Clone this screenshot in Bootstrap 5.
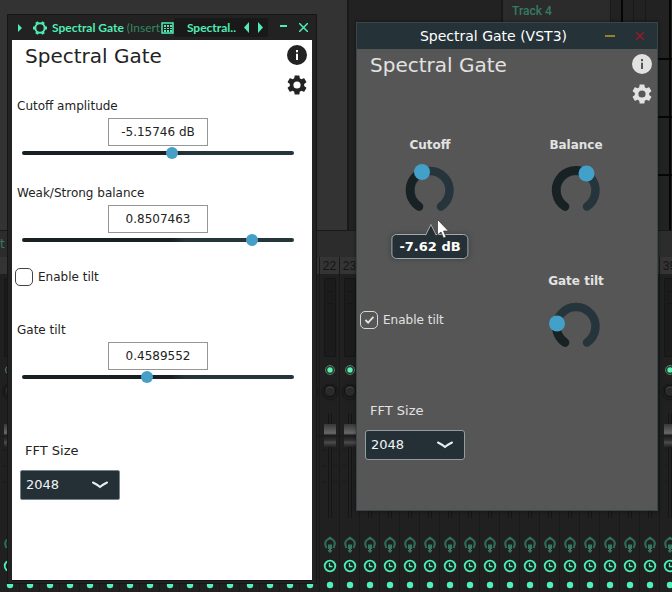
<!DOCTYPE html>
<html lang="en">
<head>
<meta charset="utf-8">
<meta name="viewport" content="width=device-width, initial-scale=1">
<title>Spectral Gate</title>
<link href="https://cdn.jsdelivr.net/npm/bootstrap@5.3.0/dist/css/bootstrap.min.css" rel="stylesheet">
<style>
  :root { --mint: #4fecb4; --slate: #243036; --ink: #232323; --accent: #469fc6; --pale: #e2e2e2; }
  body { background: #212121; font-family: "DejaVu Sans", Verdana, sans-serif; font-size: 12px; line-height: 20px; }
  svg { display: block; flex: none; }
  .desktop { min-height: 100vh; }

  /* host application behind the windows */
  .playlist { height: 230px; background: #222; }
  .pane-a { width: 349px; background: #333; border-right: 2px solid #191919; }
  .pane-gap { width: 6px; background: #2c2c2c; }
  .pane-b { width: 154px; border-right: 2px solid #191919; }
  .track-head { width: 102px; padding-left: 3px; background: #2b2b2b; border-right: 1px solid #191919; color: #377a63; font: 500 12px/23px Roboto, sans-serif; }
  .lanes { background: repeating-linear-gradient(#0000 0 56px, #060606 56px 58px) 0 2px, linear-gradient(90deg, #0000 10px, #060606 10px 12px, #0000 12px 22px, #191919 22px 23px, #0000 23px 34px, #191919 34px 35px, #0000 35px 58px, #060606 58px 60px, #0000 60px) #222; }
  .mixer-bar { height: 27px; background: #2c2c2c; border-top: 1px solid #1a1a1a; color: #377a63; line-height: 26px; }
  .strip-col { width: 20px; background: #202020; border-right: 1px solid #191919; flex: none; }
  .strip-num { height: 17px; background: #343434; color: #151515; font: 12px/18px "Liberation Sans", sans-serif; }

  .win { position: absolute; }
  .win-host { left: 7px; top: 14px; width: 310px; background: #222; border: 1px solid #161616; padding: 0 4px 2px; }
  .host-bar { height: 25px; color: var(--mint); font: 700 12px/18px Lato, sans-serif; }
  .host-bar button, .vst-bar button, .tool { background: none; border: 0; padding: 0; color: inherit; }
  .host-bar .faded { color: #348566; font-weight: 400; width: 34px; overflow: hidden; white-space: nowrap; }
  .preset { background: #191919; border-radius: 2px; height: 19px; width: 94px; }
  .face { background: #fff; color: var(--ink); border-bottom: 1px solid #111; padding-bottom: 80px; }
  .face-title { font-size: 20px; line-height: 30px; font-weight: 400; margin: 0; }
  .face-head { height: 56px; padding: 1px 4px 0 13px; }
  .tools { padding-top: 4px; gap: 9px; }
  .param { height: 64px; padding: 0 5px; }
  .param-value { width: 100px; height: 28px; border: 1px solid #969696; color: var(--ink); text-align: center; display: block; margin: 2px 0 0 91px; padding: 0; background: #fff; }
  .param .form-range { height: 14px; margin: 0 5px; width: calc(100% - 18px); display: block; }
  .form-range::-webkit-slider-runnable-track { height: 4px; border-radius: 2px; background: linear-gradient(90deg, #192023, #192023 55%, #26353b 60%); }
  .form-range::-webkit-slider-thumb { width: 12px; height: 12px; margin-top: -4px; background: var(--accent); }
  .tick { display: flex; align-items: center; padding: 0; margin: 0; min-height: 20px; }
  .tick .form-check-input { float: none; margin: 0 5px 0 0; width: 18px; height: 18px; border: 1px solid #444; border-radius: 5px; }
  .win-host .tick { padding-left: 3px; margin-top: 20px; }
  .fft { width: 100px; height: 30px; font-size: 13px; line-height: 18px; color: #f2f5f6; background-color: var(--slate); border: 1px solid #75838a; border-radius: 2px; padding: 0 0 0 5px;
    background-image: url("data:image/svg+xml,%3Csvg xmlns='http://www.w3.org/2000/svg' viewBox='0 0 16 8'%3E%3Cpath d='M1 1.5Q5 3.5 8 6Q11 3.5 15 1.5' fill='none' stroke='%23e8eef0' stroke-width='2' stroke-linecap='round'/%3E%3C/svg%3E");
    background-size: 16px 8px; background-position: right 11px center; }
  .fft-label { font-size: 13px; display: block; margin: 0 0 9px 5px; }
  .gap-l { margin-top: 23px; } .gap-xl { margin-top: 33px; } .gap-xxl { margin-top: 57px; }

  .win-vst { left: 356px; top: 22px; width: 302px; background: #565656; border: 1px solid #3b464b; color: var(--pale); padding-bottom: 50px; box-shadow: 0 0 4px #0006; }
  .vst-bar { height: 26px; background: #253238; color: #fff; font-size: 14px; }
  .vst-bar span { margin-right: 30px; }
  .vst-head { height: 86px; padding: 1px 4px 0 13px; }
  .knobs { margin-right: 8px; }
  .knob { font-weight: 700; position: relative; height: 79px; }
  .dial { position: relative; width: 54px; height: 54px; margin-top: 5px; }
  .dial input { position: absolute; inset: 0; width: 100%; height: 100%; opacity: 0; margin: 0; }
  .bubble { position: absolute; top: 99px; left: 50%; transform: translateX(-50%); height: 25px; padding: 0 7px; white-space: nowrap; font-size: 13px; line-height: 23px; color: #fff; background: var(--slate); border: 1px solid #a5acb0; border-radius: 5px; box-shadow: 0 0 5px #24303699; }
  .bubble svg { position: absolute; left: 50%; margin-left: -5px; top: -11px; }
  .cursor { position: absolute; left: 80px; top: 84px; }
  .win-vst .form-check-input { border-color: #d8d8d8; background-color: transparent;
    background-image: url("data:image/svg+xml,%3Csvg xmlns='http://www.w3.org/2000/svg' viewBox='0 0 18 18'%3E%3Cpath d='M5 9l3 3 6-6.500' fill='none' stroke='%23e2e2e2' stroke-width='2'/%3E%3C/svg%3E"); }
  .win-vst .tick { margin-top: 39px; padding-left: 3px; }
  .win-vst .fft { border-radius: 3px; border-color: #929da2; }
  .vst-fft { margin-top: 51px; }
</style>
<script src="https://cdn.jsdelivr.net/npm/bootstrap@5.3.0/dist/js/bootstrap.bundle.min.js"></script>
</head>
<body>
<svg width="0" height="0" class="position-absolute" aria-hidden="true">
  <defs>
    <linearGradient id="cap" x2="0" y2="1"><stop offset="0" stop-color="#393939"/><stop offset=".4" stop-color="#686868"/><stop offset=".5" stop-color="#1b1b1b"/><stop offset=".7" stop-color="#303030"/><stop offset=".8" stop-color="#4b4b4b"/><stop offset="1" stop-color="#222"/></linearGradient>
    <symbol id="strip" viewBox="0 0 20 318">
      <path d="M4.500 4.500h11v78h-11zM7 17.500h6M7 29.500h6" fill="#1b1b1b" stroke="#161616"/>
      <circle cx="10" cy="96" r="4.500" fill="#153a29" stroke="#667568"/><circle cx="10" cy="96" r="2.700" fill="#5ff0b0"/>
      <circle cx="10" cy="118" r="8" fill="#1d1d1d" stroke="#181818"/><circle cx="10" cy="117" r="5.500" fill="#2a2a2a" stroke="#111"/><path d="M6 115q4-4 8 0" stroke="#444" fill="none"/>
      <path d="M8.500 139v105M11.500 139v105" stroke="#151515"/>
      <path d="M0 162h5M15 162h5M3 176h3M3 192h3M3 208h3M14 176h3M14 192h3M14 208h3" stroke="#181818"/>
      <rect x="4" y="150" width="12" height="23" rx="1" fill="url(#cap)"/>
      <path d="M6.500 274Q3.500 268 7.500 265.500L10 264l2.500 1.500Q16.500 268 13.500 274" fill="none" stroke="#2f6d58" stroke-width="2"/><path d="M10 262.500l3 3H7zM8 270.500h4v4.500H8zM9 275h2v3.500H9zM8 276h4v1.500H8z" fill="#34775f"/>
      <circle cx="10" cy="292" r="5.300" fill="#17241f" stroke="#4fecb4" stroke-width="1.800"/><path d="M9.500 289v3.500h3" fill="none" stroke="#4fecb4" stroke-width="1.300"/>
      <circle cx="10" cy="311" r="3.200" fill="#55f0b9"/>
    </symbol>
    <symbol id="gear" viewBox="0 0 24 24"><path fill="currentColor" d="M19.140 12.940c.04-.3.060-.61.060-.94s-.02-.64-.07-.94l2.030-1.580c.18-.14.230-.41.120-.61l-1.920-3.320c-.12-.22-.37-.29-.59-.22l-2.390.96c-.5-.38-1.030-.7-1.620-.94l-.36-2.540c-.04-.24-.24-.41-.48-.41h-3.840c-.24 0-.43.170-.47.410l-.36 2.540c-.59.240-1.130.570-1.620.940l-2.390-.96c-.22-.08-.47 0-.59.220L2.740 8.870c-.12.210-.08.470.120.610l2.030 1.580c-.05.300-.09.630-.09.940s.02.640.070.940l-2.030 1.580c-.18.140-.23.410-.12.610l1.920 3.320c.12.220.370.290.590.220l2.390-.96c.5.380 1.030.700 1.620.940l.36 2.540c.05.240.240.410.480.410h3.840c.24 0 .44-.17.470-.41l.36-2.540c.59-.24 1.130-.56 1.620-.94l2.390.96c.22.080.470 0 .59-.22l1.920-3.320c.12-.22.070-.47-.12-.61zM12 15.600A3.600 3.600 0 1 1 12 8.400a3.600 3.600 0 0 1 0 7.200z"/></symbol>
    <symbol id="info" viewBox="0 0 20 20"><path fill="currentColor" fill-rule="evenodd" d="M10 0a10 10 0 1 0 0 20a10 10 0 1 0 0-20zM9 5h2v2.200H9zM9 8.700h2V15H9z"/></symbol>
  </defs>
</svg>

<main class="desktop position-relative overflow-hidden d-flex flex-column">
  <div class="playlist d-flex flex-shrink-0">
    <div class="pane-a flex-shrink-0"></div>
    <div class="pane-b flex-shrink-0"></div>
    <div class="pane-gap flex-shrink-0"></div>
    <div class="track-head flex-shrink-0">Track 4</div>
    <div class="lanes flex-grow-1"></div>
  </div>
  <div class="mixer-bar flex-shrink-0">t</div>
  <div class="d-flex flex-grow-1" id="mixer"></div>

  <section class="win win-host" aria-label="Spectral Gate (Insert)">
    <div class="host-bar d-flex align-items-center">
      <button class="ms-1" aria-label="Options"><svg width="8" height="8"><path d="M2 0l4 4-4 4z" fill="currentColor"/></svg></button>
      <button class="ms-2" aria-label="Settings"><svg width="16" height="16" viewBox="0 0 16 16"><circle cx="8" cy="8" r="4.700" fill="none" stroke="currentColor" stroke-width="2"/><path d="M12.500 8H15M10.300 11.900l1.200 2.100M5.700 11.900L4.500 14M3.500 8H1M5.700 4.100L4.500 2M10.300 4.100l1.200-2.100" stroke="currentColor" stroke-width="3"/></svg></button>
      <span class="ps-1 text-nowrap">Spectral Gate&nbsp;</span><span class="faded">(Insert</span>
      <button aria-label="Presets"><svg width="13" height="12"><path d="M1 1h11v10H1z" fill="none" stroke="currentColor" stroke-width="1.500"/><path d="M3 3h2v2H3zm3 0h2v2H6zm3 0h2v2H9zM3 6h2v1H3zm3 0h2v1H6zm3 0h2v1H9zM3 8h2v2H3zm3 0h2v2H6zm3 0h2v2H9z" fill="currentColor"/></svg></button>
      <div class="preset d-flex align-items-center ms-auto justify-content-end pe-1 gap-2">
        <span>Spectral..</span>
        <button aria-label="Previous preset"><svg width="6" height="11"><path d="M5 0v11L0 5.500z" fill="currentColor"/></svg></button>
        <button aria-label="Next preset"><svg width="6" height="11"><path d="M0 0v11l5-5.500z" fill="currentColor"/></svg></button>
      </div>
      <button class="ms-2 ps-1" aria-label="Minimize"><svg width="7" height="10"><path d="M0 3h7" stroke="currentColor" stroke-width="2"/></svg></button>
      <button class="ms-2 ps-1 me-1" aria-label="Close"><svg width="9" height="9"><path d="M0 0l9 9M9 0L0 9" stroke="currentColor" stroke-width="1.500"/></svg></button>
    </div>
    <div class="face">
      <div class="face-head d-flex justify-content-between">
        <h1 class="face-title">Spectral Gate</h1>
        <div class="tools d-flex flex-column align-items-center">
          <button class="tool" aria-label="About"><svg width="20" height="20"><use href="#info"/></svg></button>
          <button class="tool" aria-label="Settings"><svg width="22" height="22" viewBox="1 1 22 22"><use href="#gear" width="24" height="24"/></svg></button>
        </div>
      </div>
      <div class="param">
        <label for="cutoff" class="d-block">Cutoff amplitude</label>
        <input class="param-value" value="-5.15746 dB" aria-label="Cutoff amplitude value">
        <input type="range" class="form-range" id="cutoff" min="0" max="1" step="any" value="0.554">
      </div>
      <div class="param gap-l">
        <label for="balance" class="d-block">Weak/Strong balance</label>
        <input class="param-value" value="0.8507463" aria-label="Balance value">
        <input type="range" class="form-range" id="balance" min="0" max="1" step="any" value="0.86">
      </div>
      <div class="form-check tick">
        <input class="form-check-input" type="checkbox" id="tilt"><label for="tilt">Enable tilt</label>
      </div>
      <div class="param gap-xl">
        <label for="gate" class="d-block">Gate tilt</label>
        <input class="param-value" value="0.4589552" aria-label="Gate tilt value">
        <input type="range" class="form-range" id="gate" min="0" max="1" step="any" value="0.459">
      </div>
      <div class="ps-2 gap-xxl">
        <label class="fft-label" for="fft">FFT Size</label>
        <select class="form-select fft" id="fft"><option>2048</option></select>
      </div>
    </div>
  </section>

  <section class="win win-vst" aria-label="Spectral Gate (VST3)">
    <div class="vst-bar d-flex align-items-center justify-content-end">
      <span class="pe-2">Spectral Gate (VST3)</span>
      <button aria-label="Minimize"><svg width="10" height="4"><path d="M0 2h10" stroke="#95802c" stroke-width="2"/></svg></button>
      <button class="ms-3 ps-1 me-2 pe-1" aria-label="Close"><svg width="10" height="10"><path d="M1 1l8 8M9 1L1 9" stroke="#8e1e2c" stroke-width="1.700"/></svg></button>
    </div>
    <div class="vst-head d-flex justify-content-between">
      <h1 class="face-title">Spectral Gate</h1>
      <div class="tools d-flex flex-column align-items-center">
        <button class="tool" aria-label="About"><svg width="20" height="20"><use href="#info"/></svg></button>
        <button class="tool" aria-label="Settings"><svg width="22" height="22" viewBox="1 1 22 22"><use href="#gear" width="24" height="24"/></svg></button>
      </div>
    </div>
    <div class="knobs row row-cols-2 g-0">
      <div class="col knob d-flex flex-column align-items-center">
        <label for="k1">Cutoff</label>
        <div class="dial"><svg width="54" height="54" viewBox="-27 -30 54 54"><path d="M-11 16.500A19.500 19.500 0 1 1 11 16.500" fill="none" stroke="#26343b" stroke-width="8.500" stroke-linecap="round"/><path d="M-11 16.500A19.500 19.500 0 0 1-8-18" fill="none" stroke="#182124" stroke-width="8.500" stroke-linecap="round"/><circle cx="-8" cy="-18" r="8" fill="#43a0c8"/></svg><input type="range" id="k1"></div>
        <div class="bubble">-7.62 dB<svg width="11" height="12"><path d="M0 11.500L5.500.5 11 11.500" fill="#243036" stroke="#a5acb0"/></svg></div>
        <svg class="cursor" width="12" height="20" viewBox="0 0 12 20"><path d="M.5.5v15.500l3.500-3 2.500 6 2.500-1-2.500-6h5z" fill="#fff" stroke="#333" stroke-width=".7"/></svg>
      </div>
      <div class="col knob d-flex flex-column align-items-center">
        <label for="k2">Balance</label>
        <div class="dial"><svg width="54" height="54" viewBox="-27 -30 54 54"><path d="M-11 16.500A19.500 19.500 0 1 1 11 16.500" fill="none" stroke="#26343b" stroke-width="8.500" stroke-linecap="round"/><path d="M-11 16.500A19.500 19.500 0 0 1 10.500-16.500" fill="none" stroke="#182124" stroke-width="8.500" stroke-linecap="round"/><circle cx="10.500" cy="-16.500" r="8" fill="#43a0c8"/></svg><input type="range" id="k2"></div>
      </div>
      <div class="col gap-xxl">
        <div class="form-check tick">
          <input class="form-check-input" type="checkbox" id="tilt2" checked><label for="tilt2">Enable tilt</label>
        </div>
      </div>
      <div class="col knob gap-xxl d-flex flex-column align-items-center">
        <label for="k3">Gate tilt</label>
        <div class="dial"><svg width="54" height="54" viewBox="-27 -30 54 54"><path d="M-11 16.500A19.500 19.500 0 1 1 11 16.500" fill="none" stroke="#26343b" stroke-width="8.500" stroke-linecap="round"/><path d="M-11 16.500A19.500 19.500 0 0 1-19.500-2.500" fill="none" stroke="#182124" stroke-width="8.500" stroke-linecap="round"/><circle cx="-19" cy="-2.500" r="8" fill="#43a0c8"/></svg><input type="range" id="k3"></div>
      </div>
    </div>
    <div class="ps-2 vst-fft">
      <label class="fft-label" for="fft2">FFT Size</label>
      <select class="form-select fft" id="fft2"><option>2048</option></select>
    </div>
  </section>
</main>
<script>
  const shown = { 16: 22, 17: 23, 33: 39 };
  document.getElementById('mixer').innerHTML = Array.from({ length: 34 }, (_, i) =>
    `<div class="strip-col"><div class="strip-num text-center">${shown[i] || ''}</div>
     <svg width="20" height="318"><use href="#strip"/></svg></div>`).join('');
</script>
</body>
</html>
